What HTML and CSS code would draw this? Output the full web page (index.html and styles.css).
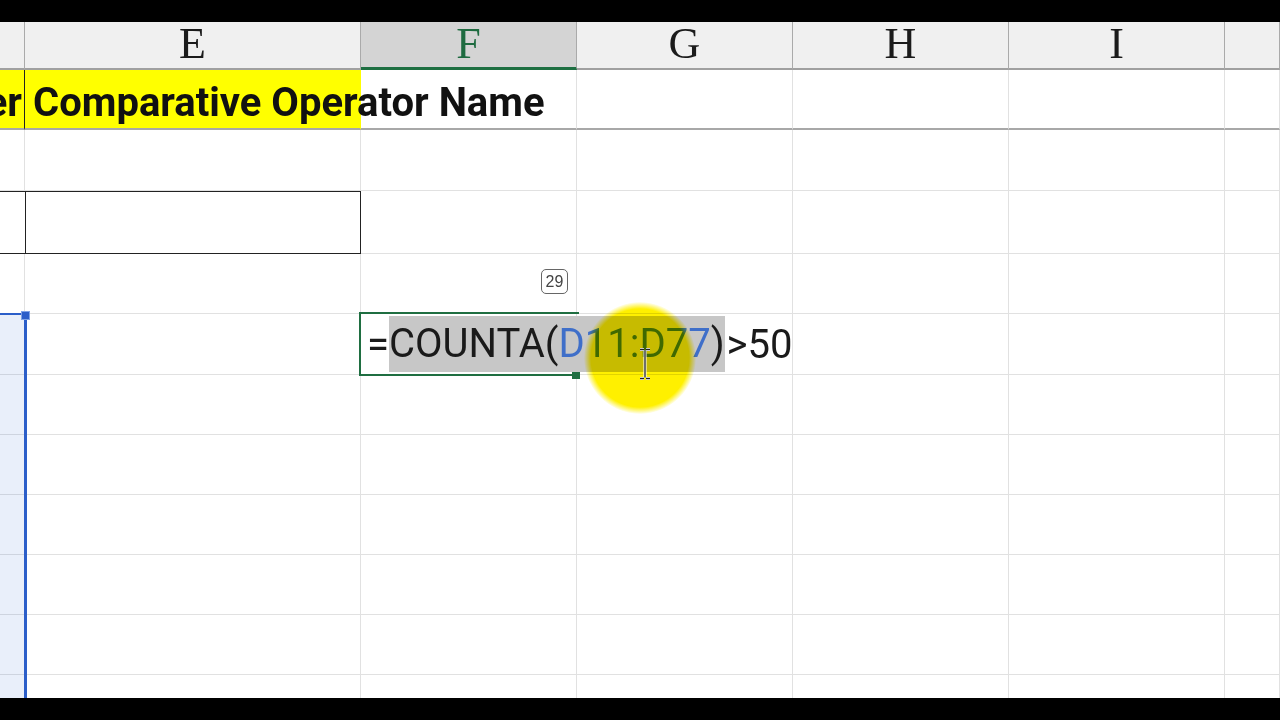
FILE: index.html
```html
<!DOCTYPE html>
<html lang="en">
<head>
  <meta charset="UTF-8">
  <title>Comparative Operator Name</title>
  <link rel="stylesheet" href="styles.css">
</head>
<body>

  <div class="screen">
    <div class="bar"></div>

    <div class="sheet">
      <div class="grid">
        <!-- column headers -->
        <div class="hd"></div>
        <div class="hd">E</div>
        <div class="hd hd-active">F</div>
        <div class="hd">G</div>
        <div class="hd">H</div>
        <div class="hd">I</div>
        <div class="hd"></div>

        <!-- row 1 -->
        <div class="c r1 yellow clip"><span>Number</span></div>
        <div class="c r1 yellow title">Comparative Operator Name</div>
        <div class="c r1"></div>
        <div class="c r1"></div>
        <div class="c r1"></div>
        <div class="c r1"></div>
        <div class="c r1"></div>

        <!-- row 2 -->
        <div class="c"></div><div class="c"></div><div class="c"></div><div class="c"></div><div class="c"></div><div class="c"></div><div class="c"></div>

        <!-- row 3 -->
        <div class="c boxed-d"></div>
        <div class="c boxed"></div>
        <div class="c"></div><div class="c"></div><div class="c"></div><div class="c"></div><div class="c"></div>

        <!-- rows 4 to 12 -->
        <div class="c"></div><div class="c"></div><div class="c"></div><div class="c"></div><div class="c"></div><div class="c"></div><div class="c"></div>
        <div class="c"></div><div class="c"></div><div class="c"></div><div class="c"></div><div class="c"></div><div class="c"></div><div class="c"></div>
        <div class="c"></div><div class="c"></div><div class="c"></div><div class="c"></div><div class="c"></div><div class="c"></div><div class="c"></div>
        <div class="c"></div><div class="c"></div><div class="c"></div><div class="c"></div><div class="c"></div><div class="c"></div><div class="c"></div>
        <div class="c"></div><div class="c"></div><div class="c"></div><div class="c"></div><div class="c"></div><div class="c"></div><div class="c"></div>
        <div class="c"></div><div class="c"></div><div class="c"></div><div class="c"></div><div class="c"></div><div class="c"></div><div class="c"></div>
        <div class="c"></div><div class="c"></div><div class="c"></div><div class="c"></div><div class="c"></div><div class="c"></div><div class="c"></div>
        <div class="c"></div><div class="c"></div><div class="c"></div><div class="c"></div><div class="c"></div><div class="c"></div><div class="c"></div>
      </div>

      <!-- referenced range D11:D77 -->
      <div class="range"></div>
      <div class="range-handle"></div>

      <!-- cell being edited -->
      <div class="editor">
        <span class="plain">=</span><span class="picked">COUNTA(<span class="ref">D11:D77</span>)</span><span class="caret"></span><span class="plain">&gt;50</span>
      </div>
      <div class="fill-handle"></div>

      <div class="badge">29</div>

      <div class="spot"></div>

      <svg class="ibeam" width="14" height="32" viewBox="0 0 14 32">
        <path d="M2 1.5h4M8 1.5h4M7 2.5v27M2 30.5h4M8 30.5h4" stroke="#fff" stroke-width="3" fill="none"/>
        <path d="M2 1.5h4M8 1.5h4M7 2.5v27M2 30.5h4M8 30.5h4" stroke="#222" stroke-width="1.3" fill="none"/>
      </svg>
    </div>

    <div class="bar"></div>
  </div>

</body>
</html>
```

FILE: styles.css
```css
body {
  margin: 0;
  background: #000;
  font-family: "Liberation Sans", Arial, sans-serif;
}
.screen {
  width: 1280px;
  height: 720px;
  display: flex;
  flex-direction: column;
  overflow: hidden;
}
.bar {
  height: 22px;
  background: #000;
  flex: none;
}
.sheet {
  position: relative;
  flex: 1;
  background: #fff;
  overflow: hidden;
}
.grid {
  display: grid;
  grid-template-columns: 25px 336px 216px 216px 216px 216px 1fr;
  grid-template-rows: 48px 60px 61px 63px 60px 61px repeat(7, 60px);
}

/* column headers */
.hd {
  box-sizing: border-box;
  background: #f0f0f0;
  border-right: 1px solid #aaa;
  border-bottom: 2px solid #a0a0a0;
  display: flex;
  align-items: center;
  justify-content: center;
  padding-bottom: 2px;
  font-family: "Liberation Serif", "Times New Roman", serif;
  font-size: 44px;
  line-height: 1;
  color: #1b1b1b;
}
.hd-active {
  background: #d4d4d4;
  border-bottom: 3px solid #1e6f42;
  color: #1e6b40;
}

/* cells */
.c {
  box-sizing: border-box;
  border-right: 1px solid #e1e1e1;
  border-bottom: 1px solid #e1e1e1;
  min-width: 0;
}
.r1 {
  border-bottom: 2px solid #a8a8a8;
  display: flex;
  align-items: center;
  padding-top: 8px;
  font-family: Roboto, "Liberation Sans", sans-serif;
  font-weight: bold;
  font-size: 40px;
  line-height: 1.1;
  color: #111;
  white-space: nowrap;
}
.yellow {
  background: #ffff00;
}
.clip {
  overflow: hidden;
  justify-content: flex-end;
  border-right: 1px solid #222;
  padding-right: 2px;
}
.title {
  padding-left: 8px;
  border-right-color: transparent;
}
.boxed {
  border: 1.5px solid #222;
}
.boxed-d {
  border-top: 1.5px solid #222;
  border-bottom: 1.5px solid #222;
  border-right: none;
}

/* range highlight in column D */
.range {
  position: absolute;
  left: 0;
  top: 291px;
  bottom: 0;
  width: 24px;
  background: rgba(40, 100, 210, 0.1);
  border-top: 2px solid #2b5ec9;
  border-right: 3px solid #2b5ec9;
}
.range-handle {
  position: absolute;
  left: 21px;
  top: 289px;
  width: 7px;
  height: 7px;
  background: #2b5ec9;
  border: 1px solid #7ea2e6;
}

/* in-cell editor */
.editor {
  position: absolute;
  left: 359px;
  top: 290px;
  width: 212px;
  height: 60px;
  border-top: 2px solid #1f6e41;
  border-left: 2px solid #1f6e41;
  border-bottom: 2px solid #1f6e41;
  display: flex;
  align-items: center;
  padding-left: 6px;
  box-sizing: content-box;
  white-space: nowrap;
  font-family: Roboto, "Liberation Sans", sans-serif;
  font-size: 40px;
  color: #1a1a1a;
}
.picked {
  display: inline-block;
  line-height: 56px;
  background: #c7c7c7;
}
.ref {
  color: #3f6fc9;
}
.caret {
  display: inline-block;
  width: 2px;
  height: 52px;
  background: #111;
  margin: 0 1px;
}
.fill-handle {
  position: absolute;
  left: 572px;
  top: 350px;
  width: 8px;
  height: 7px;
  background: #1f6e41;
}
.badge {
  position: absolute;
  left: 541px;
  top: 247px;
  width: 25px;
  height: 23px;
  border: 1.5px solid #666;
  border-radius: 5px;
  background: #fff;
  font-size: 16px;
  line-height: 1;
  color: #444;
  display: flex;
  align-items: center;
  justify-content: center;
}
.spot {
  position: absolute;
  left: 584px;
  top: 280px;
  width: 112px;
  height: 112px;
  border-radius: 50%;
  background: radial-gradient(circle, #fff000 0, #fff000 62%, rgba(255, 240, 0, 0) 71%);
  mix-blend-mode: multiply;
}
.ibeam {
  position: absolute;
  left: 638px;
  top: 326px;
}
```
